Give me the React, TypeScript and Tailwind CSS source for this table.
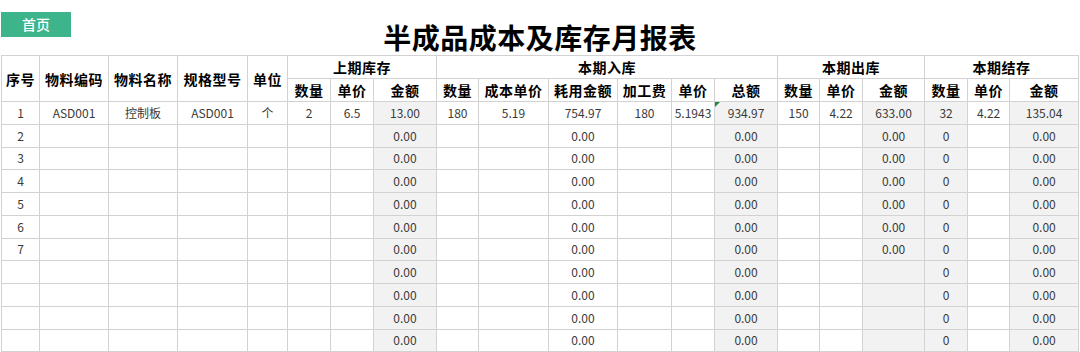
import React from "react";

const widths = [38, 69, 69, 70, 40, 43, 43, 63, 42, 70, 69, 54, 43, 63, 42, 43, 62, 43, 42, 69];
const grayCols = new Set([7, 13, 16, 17, 19]);

const row1 = ["1", "ASD001", "控制板", "ASD001", "个", "2", "6.5", "13.00", "180", "5.19", "754.97", "180", "5.1943", "934.97", "150", "4.22", "633.00", "32", "4.22", "135.04"];

function makeRow(i: number): string[] {
  const r = Array(20).fill("");
  if (i <= 7) r[0] = String(i);
  r[7] = "0.00";
  r[10] = "0.00";
  r[13] = "0.00";
  if (i <= 7) r[16] = "0.00";
  r[17] = "0";
  r[19] = "0.00";
  return r;
}

const rows: string[][] = [row1];
for (let i = 2; i <= 11; i++) rows.push(makeRow(i));

const th = "border border-[#d2d2d2] font-bold text-[14px] tracking-[0.5px] text-black text-center p-0 leading-none";
const td = "border border-[#d2d2d2] text-[12px] text-[#3a3a3a] text-center p-0 leading-none whitespace-nowrap";

export default function App() {
  return (
    <div
      className="w-[1080px] h-[352px] bg-white overflow-hidden"
      style={{ fontFamily: '"Noto Sans CJK SC", "Noto Sans", sans-serif' }}
    >
      <div className="grid grid-cols-3 h-[55px]">
        <div className="pl-[1px] pt-[12px]">
          <div className="w-[70px] h-[25px] bg-[#3db489] text-white text-[14px] font-medium flex items-center justify-center">
            首页
          </div>
        </div>
        <div className="flex justify-center items-end pb-[4px]">
          <div className="text-[28px] font-bold text-black leading-none tracking-[0.5px]">半成品成本及库存月报表</div>
        </div>
        <div />
      </div>
      <div className="pl-[1px]">
        <table className="table-fixed border-collapse w-[1077px]">
          <colgroup>
            {widths.map((w, i) => (
              <col key={i} style={{ width: w }} />
            ))}
          </colgroup>
          <thead>
            <tr className="h-[23px]">
              <th rowSpan={2} className={th}>序号</th>
              <th rowSpan={2} className={th}>物料编码</th>
              <th rowSpan={2} className={th}>物料名称</th>
              <th rowSpan={2} className={th}>规格型号</th>
              <th rowSpan={2} className={th}>单位</th>
              <th colSpan={3} className={th}>上期库存</th>
              <th colSpan={6} className={th}>本期入库</th>
              <th colSpan={3} className={th}>本期出库</th>
              <th colSpan={3} className={th}>本期结存</th>
            </tr>
            <tr className="h-[23px]">
              {["数量", "单价", "金额", "数量", "成本单价", "耗用金额", "加工费", "单价", "总额", "数量", "单价", "金额", "数量", "单价", "金额"].map((t, i) => (
                <th key={i} className={th}>{t}</th>
              ))}
            </tr>
          </thead>
          <tbody>
            {rows.map((r, ri) => (
              <tr key={ri} className="h-[22.75px]">
                {r.map((c, ci) => (
                  <td
                    key={ci}
                    className={`${td} ${grayCols.has(ci) ? "bg-[#f2f2f2]" : "bg-white"} ${ri === 0 && ci === 13 ? "relative" : ""}`}
                  >
                    {ri === 0 && ci === 13 && (
                      <span className="absolute left-0 top-0 w-0 h-0 border-t-[5px] border-t-[#1e8a3a] border-r-[5px] border-r-transparent" />
                    )}
                    {c}
                  </td>
                ))}
              </tr>
            ))}
          </tbody>
        </table>
      </div>
    </div>
  );
}
